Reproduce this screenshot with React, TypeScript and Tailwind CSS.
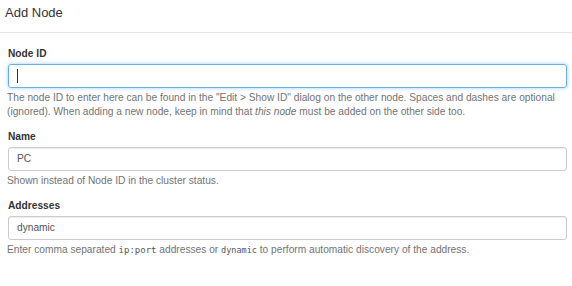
import React from "react";

const font = { fontFamily: '"Liberation Sans", Arial, sans-serif' };
const mono = { fontFamily: '"DejaVu Sans Mono", "Liberation Mono", monospace' };

function Label({ children }: { children: React.ReactNode }) {
  return <div className="text-[10.2px] leading-[14px] font-bold text-[#333333] mb-[3px] pl-[1px]">{children}</div>;
}

function Help({ children }: { children: React.ReactNode }) {
  return <div className="mt-[3px] text-[10.2px] leading-[14px] text-[#737373]">{children}</div>;
}

export default function App() {
  return (
    <div className="w-[572px] h-[286px] bg-white overflow-hidden" style={font}>
      <div className="h-[33px] border-b border-[#e5e5e5] pl-[5px] pt-[5px]">
        <div className="text-[13px] leading-[16px] text-[#333333]">Add Node</div>
      </div>
      <div className="pl-[7px] pr-[5px] pt-[14px]">
        <div className="mb-[11px]">
          <Label>Node ID</Label>
          <div className="ml-[1px] h-[24px] rounded-[3px] border border-[#66afe9] shadow-[0_0_4px_rgba(102,175,233,0.6)] flex items-center pl-[8px]">
            <div className="w-px h-[14px] bg-[#333]" />
          </div>
          <Help>
            The node ID to enter here can be found in the "Edit &gt; Show ID" dialog on the other node. Spaces and dashes are optional (ignored). When adding a new node, keep in mind that <i>this node</i> must be added on the other side too.
          </Help>
        </div>
        <div className="mb-[11px]">
          <Label>Name</Label>
          <div className="ml-[1px] h-[24px] rounded-[3px] border border-[#cccccc] shadow-[inset_0_1px_1px_rgba(0,0,0,0.075)] flex items-center pl-[8px] text-[10.2px] text-[#555555]">
            PC
          </div>
          <Help>Shown instead of Node ID in the cluster status.</Help>
        </div>
        <div>
          <Label>Addresses</Label>
          <div className="ml-[1px] h-[24px] rounded-[3px] border border-[#cccccc] shadow-[inset_0_1px_1px_rgba(0,0,0,0.075)] flex items-center pl-[8px] text-[10.2px] text-[#555555]">
            dynamic
          </div>
          <Help>
            Enter comma separated{" "}
            <span className="text-[9px] text-[#555555]" style={mono}>ip:port</span>{" "}
            addresses or{" "}
            <span className="text-[8.5px] text-[#555555]" style={mono}>dynamic</span>{" "}
            to perform automatic discovery of the address.
          </Help>
        </div>
      </div>
    </div>
  );
}
